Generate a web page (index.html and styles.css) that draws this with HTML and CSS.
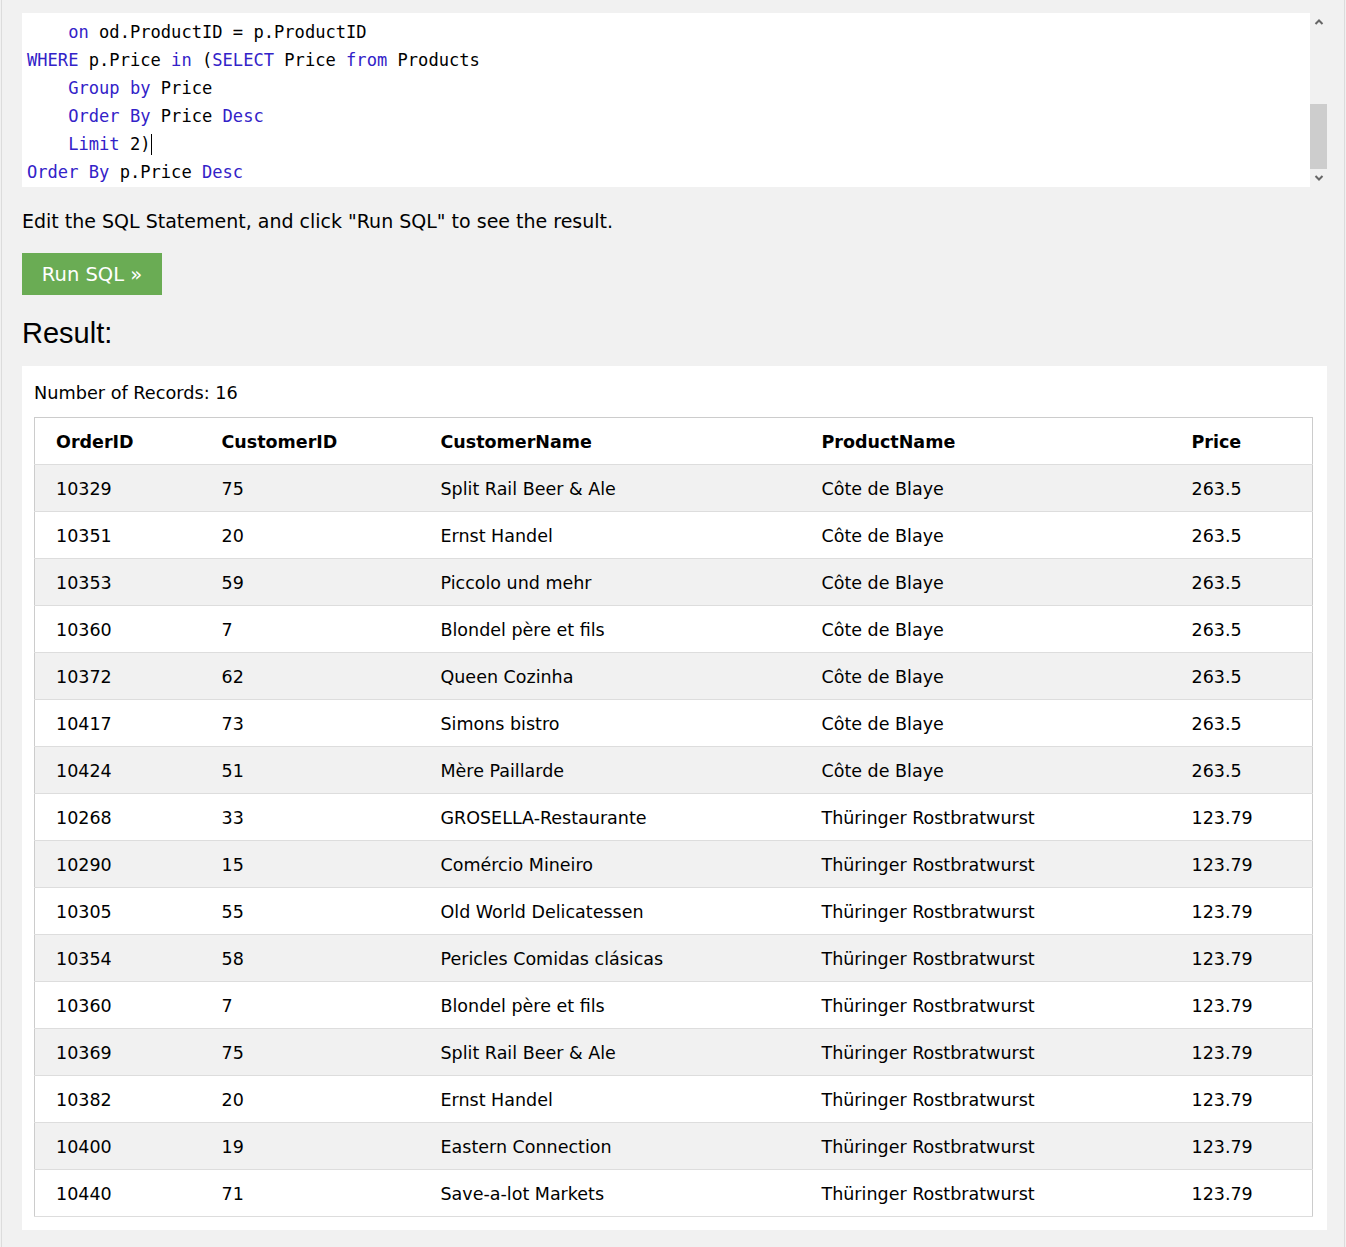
FILE: index.html
```html
<!DOCTYPE html>
<html>
<head>
<meta charset="utf-8">
<link rel="stylesheet" href="styles.css">
</head>
<body>
<div class="frame">
  <div class="editor-row">
    <div class="editor">
      <div class="line">    <span class="kw">on</span> od.ProductID = p.ProductID</div>
      <div class="line"><span class="kw">WHERE</span> p.Price <span class="kw">in</span> (<span class="kw">SELECT</span> Price <span class="kw">from</span> Products</div>
      <div class="line">    <span class="kw">Group</span> <span class="kw">by</span> Price</div>
      <div class="line">    <span class="kw">Order</span> <span class="kw">By</span> Price <span class="kw">Desc</span></div>
      <div class="line">    <span class="kw">Limit</span> 2)<span class="cursor"></span></div>
      <div class="line"><span class="kw">Order</span> <span class="kw">By</span> p.Price <span class="kw">Desc</span></div>
    </div>
    <div class="scrollbar">
      <svg class="arrow" width="10" height="8" viewBox="0 0 10 8"><path d="M1.5 6 L5 2.5 L8.5 6" fill="none" stroke="#666" stroke-width="2"/></svg>
      <div class="track"><div class="thumb"></div></div>
      <svg class="arrow" width="10" height="8" viewBox="0 0 10 8"><path d="M1.5 2 L5 5.5 L8.5 2" fill="none" stroke="#666" stroke-width="2"/></svg>
    </div>
  </div>
  <p class="hint">Edit the SQL Statement, and click "Run SQL" to see the result.</p>
  <button class="run">Run SQL »</button>
  <h2 class="result-title">Result:</h2>
  <div class="result">
    <div class="count">Number of Records: 16</div>
    <table class="grid">
      <colgroup><col class="c1"><col class="c2"><col class="c3"><col class="c4"><col class="c5"></colgroup>
      <tr><th>OrderID</th><th>CustomerID</th><th>CustomerName</th><th>ProductName</th><th>Price</th></tr>
      <tr><td>10329</td><td>75</td><td>Split Rail Beer &amp; Ale</td><td>Côte de Blaye</td><td>263.5</td></tr>
      <tr><td>10351</td><td>20</td><td>Ernst Handel</td><td>Côte de Blaye</td><td>263.5</td></tr>
      <tr><td>10353</td><td>59</td><td>Piccolo und mehr</td><td>Côte de Blaye</td><td>263.5</td></tr>
      <tr><td>10360</td><td>7</td><td>Blondel père et fils</td><td>Côte de Blaye</td><td>263.5</td></tr>
      <tr><td>10372</td><td>62</td><td>Queen Cozinha</td><td>Côte de Blaye</td><td>263.5</td></tr>
      <tr><td>10417</td><td>73</td><td>Simons bistro</td><td>Côte de Blaye</td><td>263.5</td></tr>
      <tr><td>10424</td><td>51</td><td>Mère Paillarde</td><td>Côte de Blaye</td><td>263.5</td></tr>
      <tr><td>10268</td><td>33</td><td>GROSELLA-Restaurante</td><td>Thüringer Rostbratwurst</td><td>123.79</td></tr>
      <tr><td>10290</td><td>15</td><td>Comércio Mineiro</td><td>Thüringer Rostbratwurst</td><td>123.79</td></tr>
      <tr><td>10305</td><td>55</td><td>Old World Delicatessen</td><td>Thüringer Rostbratwurst</td><td>123.79</td></tr>
      <tr><td>10354</td><td>58</td><td>Pericles Comidas clásicas</td><td>Thüringer Rostbratwurst</td><td>123.79</td></tr>
      <tr><td>10360</td><td>7</td><td>Blondel père et fils</td><td>Thüringer Rostbratwurst</td><td>123.79</td></tr>
      <tr><td>10369</td><td>75</td><td>Split Rail Beer &amp; Ale</td><td>Thüringer Rostbratwurst</td><td>123.79</td></tr>
      <tr><td>10382</td><td>20</td><td>Ernst Handel</td><td>Thüringer Rostbratwurst</td><td>123.79</td></tr>
      <tr><td>10400</td><td>19</td><td>Eastern Connection</td><td>Thüringer Rostbratwurst</td><td>123.79</td></tr>
      <tr><td>10440</td><td>71</td><td>Save-a-lot Markets</td><td>Thüringer Rostbratwurst</td><td>123.79</td></tr>
    </table>
  </div>
</div>
</body>
</html>
```
FILE: styles.css
```css
html, body {
  margin: 0;
  padding: 0;
  background: #f1f1f1;
}
body {
  font-family: "DejaVu Sans", Verdana, sans-serif;
  color: #000;
}
.frame {
  margin-left: 1px;
  width: 1344px;
  min-height: 1247px;
  box-sizing: border-box;
  border-left: 1px solid #dcdcdc;
  border-right: 1px solid #dcdcdc;
  padding: 13px 17px 0 20px;
}
.editor-row {
  display: flex;
  height: 174px;
}
.editor {
  flex: 1;
  background: #fff;
  padding: 5px 0 0 5px;
  box-sizing: border-box;
  font-family: "DejaVu Sans Mono", monospace;
  font-size: 17.1px;
  color: #000;
}
.line {
  height: 28px;
  line-height: 28px;
  white-space: pre;
}
.kw {
  color: #3322c8;
}
.cursor {
  display: inline-block;
  width: 1px;
  height: 21px;
  background: #000;
  vertical-align: -5px;
}
.scrollbar {
  width: 17px;
  background: #f1f1f1;
  display: flex;
  flex-direction: column;
  align-items: center;
}
.arrow {
  display: block;
  margin: 5px 0;
}
.track {
  flex: 1;
  align-self: stretch;
}
.thumb {
  margin-top: 73px;
  height: 65px;
  background: #cdcdcd;
}
.hint {
  margin: 22px 0 0 0;
  font-size: 19px;
  line-height: 24px;
}
.run {
  display: block;
  margin-top: 20px;
  height: 42px;
  width: 140px;
  border: none;
  background: #6aac54;
  color: #fff;
  font-family: "DejaVu Sans", Verdana, sans-serif;
  font-size: 19.5px;
  padding: 0;
}
.result-title {
  margin: 21px 0 0 0;
  font-weight: normal;
  font-size: 29px;
  line-height: 34px;
  font-family: "Liberation Sans", Arial, sans-serif;
}
.result {
  margin-top: 16px;
  background: #fff;
  padding: 14px 14px 13px 12px;
}
.count {
  font-size: 17.7px;
  line-height: 24px;
  padding-top: 1px;
  height: 23px;
  margin-bottom: 13px;
}
.grid {
  width: 100%;
  border-collapse: collapse;
  table-layout: fixed;
  border: 1px solid #ccc;
  font-size: 17.5px;
}
.c1 { width: 179px; }
.c2 { width: 219px; }
.c3 { width: 381px; }
.c4 { width: 370px; }
.grid th, .grid td {
  text-align: left;
  padding: 1px 8px 0 8px;
  height: 45px;
  border-bottom: 1px solid #ddd;
  white-space: nowrap;
}
.grid th:first-child, .grid td:first-child {
  padding-left: 21px;
}
.grid th {
  font-weight: bold;
}
.grid tr:nth-child(even) td {
  background: #f1f1f1;
}
```
